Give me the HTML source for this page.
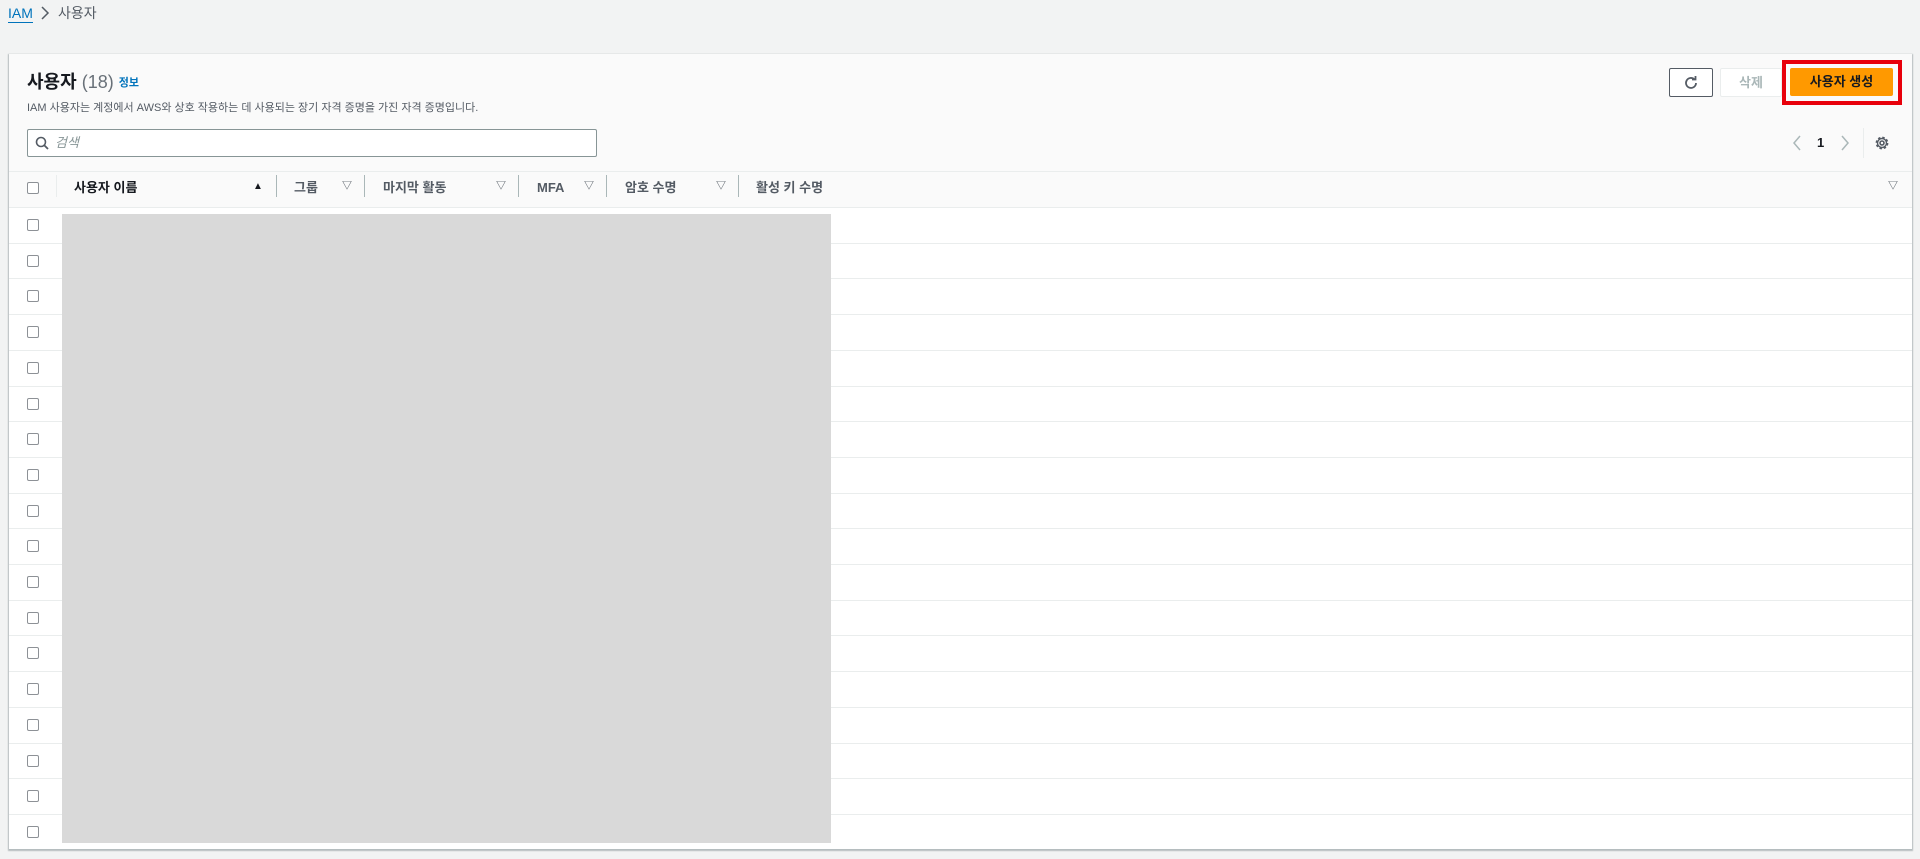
<!DOCTYPE html>
<html><head><meta charset="utf-8"><style>
*{margin:0;padding:0;box-sizing:border-box}
body{width:1920px;height:859px;background:#f2f3f3;font-family:"Liberation Sans","Noto Sans CJK KR",sans-serif;color:#16191f;position:relative;overflow:hidden}
.a{position:absolute;white-space:nowrap}
.card{position:absolute;left:9px;top:54px;width:1903px;height:795px;background:#fff;box-shadow:0 1px 1px 1px rgba(0,28,36,.25)}
.hdr{position:absolute;left:0;top:0;width:100%;height:153px;background:#fafafa}
.cb{position:absolute;width:12px;height:12px;border:1.5px solid #8d9196;border-radius:2px;background:#fff}
.row{position:absolute;left:0;width:100%;height:1px;background:#eaeded}
.th{position:absolute;top:126px;font-size:13px;font-weight:bold;color:#545b64;line-height:16px}
.sep{position:absolute;top:121px;width:1px;height:22px;background:#aab7b8}
.tri{position:absolute;top:126px;font-size:10px;line-height:14px;color:#545b64;font-weight:bold}
</style></head><body>
<div class="a" style="left:8px;top:4px;font-size:14px;color:#0073bb;border-bottom:1px solid #0073bb;line-height:18px">IAM</div>
<svg class="a" style="left:40px;top:6px" width="10" height="14" viewBox="0 0 10 14"><path d="M2 1l6 6-6 6" fill="none" stroke="#545b64" stroke-width="1.5"/></svg>
<div class="a" style="left:58px;top:4px;font-size:14px;color:#545b64;line-height:18px">사용자</div>

<div class="card">
<div class="hdr"></div>
<div class="a" style="left:18px;top:16px;font-size:18px;line-height:24px"><b>사용자</b> <span style="color:#687078">(18)</span> <span style="font-size:11px;color:#0073bb;font-weight:bold;vertical-align:2px">정보</span></div>
<div class="a" style="left:18px;top:46px;font-size:11px;color:#545b64;line-height:16px">IAM 사용자는 계정에서 AWS와 상호 작용하는 데 사용되는 장기 자격 증명을 가진 자격 증명입니다.</div>
<div class="a" style="left:18px;top:75px;width:570px;height:28px;border:1px solid #879596;border-radius:2px;background:#fff"></div>
<svg class="a" style="left:26px;top:82px" width="14" height="14" viewBox="0 0 14 14"><circle cx="6" cy="6" r="4.5" fill="none" stroke="#545b64" stroke-width="1.6"/><path d="M9.5 9.5L13 13" stroke="#545b64" stroke-width="1.8"/></svg>
<div class="a" style="left:46px;top:80px;font-size:13px;color:#879596;font-style:italic;line-height:18px">검색</div>

<div class="a" style="left:1660px;top:14px;width:44px;height:29px;border:1px solid #545b64;border-radius:2px;background:#fff"></div>
<svg class="a" style="left:1674px;top:21px" width="16" height="16" viewBox="0 0 16 16"><path d="M13 8a5 5 0 1 1-1.6-3.7" fill="none" stroke="#545b64" stroke-width="1.8"/><path d="M9 4.5h3.5V1" fill="none" stroke="#545b64" stroke-width="1.8"/></svg>
<div class="a" style="left:1711px;top:14px;width:62px;height:29px;border:1px solid #eaeded;border-radius:2px;background:#fff;font-size:13px;color:#aab7b8;text-align:center;line-height:27px;font-weight:bold">삭제</div>
<div class="a" style="left:1773px;top:6px;width:120px;height:45px;border:4px solid #e8000b"></div>
<div class="a" style="left:1781px;top:14px;width:103px;height:28px;background:#ff9900;border-radius:2px;font-size:13px;font-weight:bold;text-align:center;line-height:28px;color:#16191f">사용자 생성</div>

<svg class="a" style="left:1783px;top:81px" width="10" height="16" viewBox="0 0 10 16"><path d="M8 1L2 8l6 7" fill="none" stroke="#aab7b8" stroke-width="1.5"/></svg>
<div class="a" style="left:1808px;top:81px;font-size:13px;font-weight:bold;line-height:16px">1</div>
<svg class="a" style="left:1831px;top:81px" width="10" height="16" viewBox="0 0 10 16"><path d="M2 1l6 7-6 7" fill="none" stroke="#aab7b8" stroke-width="1.5"/></svg>
<div class="a" style="left:1854px;top:74px;width:1px;height:30px;background:#eaeded"></div>
<svg class="a" style="left:1865px;top:81px" width="16" height="16" viewBox="0 0 16 16"><circle cx="8" cy="8" r="2" fill="none" stroke="#545b64" stroke-width="1.6"/><circle cx="8" cy="8" r="5.2" fill="none" stroke="#545b64" stroke-width="2.4" stroke-dasharray="2.3 1.8"/><circle cx="8" cy="8" r="4.5" fill="none" stroke="#545b64" stroke-width="1.4"/></svg>

<div class="row" style="top:117px"></div>
<div class="cb" style="left:18px;top:128px"></div>
<div class="sep" style="left:47px;background:#eaeded"></div>
<div class="th" style="left:65px;color:#16191f">사용자 이름</div>
<div class="tri" style="left:244px;color:#16191f">▲</div>
<div class="sep" style="left:267px"></div>
<div class="th" style="left:285px">그룹</div><div class="tri" style="left:333px">▽</div>
<div class="sep" style="left:355px"></div>
<div class="th" style="left:374px">마지막 활동</div><div class="tri" style="left:487px">▽</div>
<div class="sep" style="left:509px"></div>
<div class="th" style="left:528px">MFA</div><div class="tri" style="left:575px">▽</div>
<div class="sep" style="left:597px"></div>
<div class="th" style="left:616px">암호 수명</div><div class="tri" style="left:707px">▽</div>
<div class="sep" style="left:729px"></div>
<div class="th" style="left:747px">활성 키 수명</div>
<div class="tri" style="left:1879px">▽</div>
<div class="row" style="top:153px"></div>

<div id="rows"></div>
<div class="a" style="left:53px;top:160px;width:769px;height:629px;background:#d9d9d9"></div>
</div>
<script>
var h='';for(var i=0;i<18;i++){var t=153+i*35.7;if(i>0)h+='<div class="row" style="top:'+Math.round(t)+'px"></div>';h+='<div class="cb" style="left:18px;top:'+Math.round(t+12)+'px"></div>';}
document.getElementById('rows').innerHTML=h;
</script>
</body></html>
